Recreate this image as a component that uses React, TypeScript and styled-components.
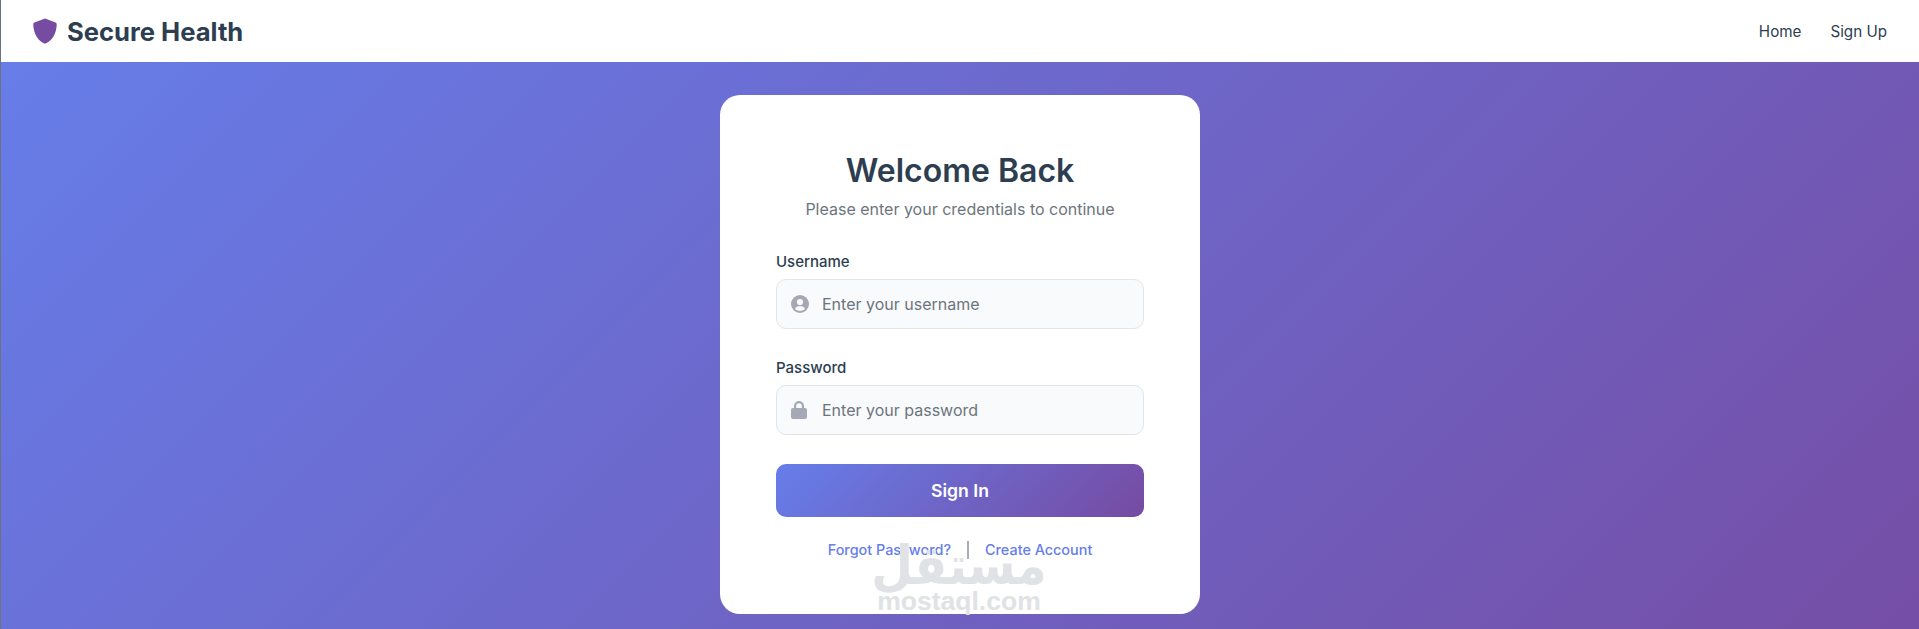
import styled, { createGlobalStyle } from "styled-components";

const GlobalStyle = createGlobalStyle`
  * {
    box-sizing: border-box;
  }
  html, body {
    margin: 0;
    padding: 0;
    height: 100%;
    overflow: hidden;
    font-family: Inter, "Liberation Sans", sans-serif;
  }
`;

const Page = styled.div`
  height: 629px;
  display: flex;
  flex-direction: column;
  border-left: 1px solid #6b7280;
  background: linear-gradient(135deg, #667eea 0%, #764ba2 106%);
`;

const Navbar = styled.nav`
  height: 62px;
  flex: none;
  display: flex;
  align-items: center;
  justify-content: space-between;
  padding: 0 32px;
  background: #fff;
`;

const Brand = styled.div`
  display: flex;
  align-items: center;
  gap: 10px;
  font-size: 25.6px;
  font-weight: 700;
  color: #2c3e50;
`;

const NavLinks = styled.div`
  display: flex;
  gap: 29px;
`;

const NavLink = styled.a`
  font-size: 15.2px;
  color: #2c3e50;
`;

const Main = styled.main`
  flex: 1;
  display: flex;
  justify-content: center;
  padding-top: 33px;
`;

const Card = styled.section`
  position: relative;
  width: 480px;
  height: 519px;
  padding: 56px 56px 0;
  background: #fff;
  border-radius: 20px;
`;

const Title = styled.h1`
  margin: 0;
  font-size: 32px;
  line-height: 39px;
  font-weight: 600;
  color: #2c3e50;
  text-align: center;
`;

const Subtitle = styled.p`
  margin: 9px 0 0;
  font-size: 16px;
  line-height: 20px;
  color: #6c757d;
  text-align: center;
`;

const Field = styled.div<{ $first?: boolean }>`
  margin-top: ${(p) => (p.$first ? "31px" : "27px")};
`;

const Label = styled.label`
  display: block;
  margin-bottom: 5px;
  font-size: 15px;
  line-height: 24px;
  font-weight: 500;
  color: #2c3e50;
`;

const InputWrap = styled.div`
  display: flex;
  align-items: center;
  height: 50px;
  padding: 0 14px;
  gap: 13px;
  background: #f9fafb;
  border: 1px solid #e1e4e8;
  border-radius: 10px;
`;

const IconBox = styled.span`
  width: 18px;
  display: flex;
  justify-content: flex-start;
  color: #a5a8b5;
`;

const Input = styled.input`
  flex: 1;
  min-width: 0;
  border: 0;
  outline: 0;
  padding: 0;
  background: transparent;
  font: inherit;
  font-size: 16px;
  color: #2c3e50;

  &::placeholder {
    color: #6c757d;
    opacity: 1;
  }
`;

const SubmitButton = styled.button`
  display: block;
  width: 100%;
  height: 53px;
  margin-top: 29px;
  border: 0;
  border-radius: 10px;
  background: linear-gradient(135deg, #667eea 0%, #764ba2 100%);
  color: #fff;
  font: inherit;
  font-size: 17.6px;
  font-weight: 600;
`;

const FormLinks = styled.div`
  display: flex;
  justify-content: center;
  align-items: center;
  margin-top: 24px;
  font-size: 14.4px;
  line-height: 18px;
  font-weight: 500;
`;

const FormLink = styled.a`
  color: #667eea;
`;

const Divider = styled.span`
  width: 2px;
  height: 18px;
  margin: 0 16px;
  background: #a9adb8;
`;

const Watermark = styled.div`
  position: absolute;
  left: 157px;
  top: 447px;
  width: 164px;
  display: flex;
  flex-direction: column;
  align-items: center;
  color: #e0e2e6;
  pointer-events: none;
`;

const WatermarkArabic = styled.div`
  font-family: "DejaVu Sans", sans-serif;
  font-size: 48px;
  line-height: 46px;
  font-weight: 700;
  white-space: nowrap;
  transform: scaleY(1.12);
`;

const WatermarkLatin = styled.div`
  font-family: "Liberation Sans", sans-serif;
  font-size: 26.5px;
  line-height: 26px;
  font-weight: 700;
  white-space: nowrap;
`;

const ShieldIcon = () => (
  <svg width="24" height="26" viewBox="0 0 24 26">
    <path
      fill="#764ba2"
      d="M12 0.5 22.6 4.4c.7.3 1.1.9 1.1 1.6 0 5.6-1.900 15.400-11 19.400-.5.2-1 .2-1.400 0C2.200 21.400.3 11.600.3 6c0-.7.4-1.300 1.100-1.600z"
    />
  </svg>
);

const UserIcon = () => (
  <svg width="18" height="18" viewBox="0 0 18 18">
    <circle cx="9" cy="9" r="9" fill="currentColor" />
    <circle cx="9" cy="7" r="3.1" fill="#f9fafb" />
    <path fill="#f9fafb" d="M4 14c.6-2 2.400-3 5-3s4.400 1 5 3c-1.200 1.100-3 1.800-5 1.800S5.200 15.100 4 14z" />
  </svg>
);

const LockIcon = () => (
  <svg width="16" height="18" viewBox="0 0 16 18">
    <path
      fill="currentColor"
      d="M3 7V5a5 5 0 0 1 10 0v2h1a2 2 0 0 1 2 2v7a2 2 0 0 1-2 2H2a2 2 0 0 1-2-2V9a2 2 0 0 1 2-2zm2.200 0h5.600V5a2.800 2.800 0 0 0-5.600 0z"
    />
  </svg>
);

export default function App() {
  return (
    <>
      <GlobalStyle />
      <Page>
        <Navbar>
          <Brand>
            <ShieldIcon />
            Secure Health
          </Brand>
          <NavLinks>
            <NavLink>Home</NavLink>
            <NavLink>Sign Up</NavLink>
          </NavLinks>
        </Navbar>
        <Main>
          <Card>
            <Title>Welcome Back</Title>
            <Subtitle>Please enter your credentials to continue</Subtitle>
            <Field $first>
              <Label>Username</Label>
              <InputWrap>
                <IconBox>
                  <UserIcon />
                </IconBox>
                <Input placeholder="Enter your username" />
              </InputWrap>
            </Field>
            <Field>
              <Label>Password</Label>
              <InputWrap>
                <IconBox>
                  <LockIcon />
                </IconBox>
                <Input placeholder="Enter your password" />
              </InputWrap>
            </Field>
            <SubmitButton>Sign In</SubmitButton>
            <FormLinks>
              <FormLink>Forgot Password?</FormLink>
              <Divider />
              <FormLink>Create Account</FormLink>
            </FormLinks>
            <Watermark>
              <WatermarkArabic>مستقل</WatermarkArabic>
              <WatermarkLatin>mostaql.com</WatermarkLatin>
            </Watermark>
          </Card>
        </Main>
      </Page>
    </>
  );
}
